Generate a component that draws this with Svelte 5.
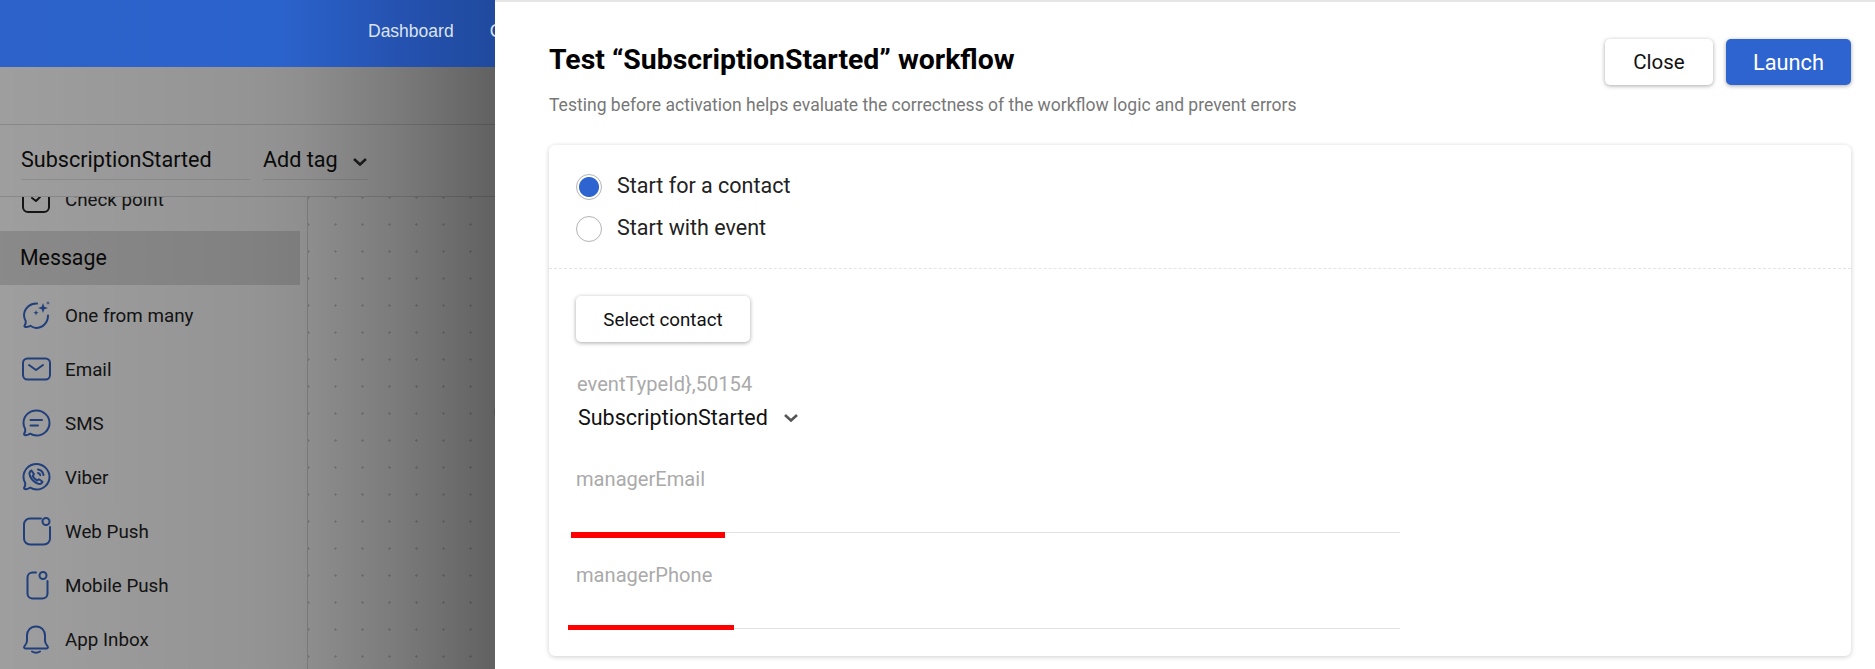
<script>
  const field = [
    { label: 'managerEmail', cls: 'email' },
    { label: 'managerPhone', cls: 'phone' }
  ];
</script>

<div class="page">
  <header class="top">
    <nav class="nav"><span>Dashboard</span><span>Contacts</span></nav>
  </header>
  <div class="toolbar"></div>
  <div class="titlebar">
    <div class="name">SubscriptionStarted</div>
    <div class="tag">Add tag
      <svg class="chev" width="16" height="10" viewBox="0 0 16 10"><path d="M2 2l6 5.500 6-5.500" fill="none" stroke="#333" stroke-width="2.600"/></svg>
    </div>
  </div>
  <main class="main">
    <aside class="side">
      <div class="item check">
        <svg viewBox="0 0 28 28" class="ico"><path d="M1 4v18a5 5 0 0 0 5 5h16a5 5 0 0 0 5-5V4M10 13l4 3 4-4" /></svg>
        <span>Check point</span>
      </div>
      <div class="group">Message</div>
      <div class="item">
        <svg viewBox="0 0 28 28" class="ico"><path d="M15 2.600A12.200 12.200 0 0 0 2 14c0 2.300.6 4.300 1.700 6 .3 1.500-.2 3.500-1.300 5 .2 1 1 1.200 2 1 1.600-.2 3-.6 4-1.300A12.700 12.700 0 0 0 14 27c6.500 0 12-5 12-12.500"/><path class="fill" d="M21 2l1.300 3.700L26 7l-3.700 1.300L21 12l-1.300-3.700L16 7l3.700-1.300zM14 9l.7 2 2 .7-2 .7-.7 2-.7-2-2-.7 2-.7zM26 0l.5 1.500L28 2l-1.500.5L26 4l-.5-1.500L24 2l1.500-.5z"/></svg>
        <span>One from many</span>
      </div>
      <div class="item">
        <svg viewBox="0 0 28 28" class="ico"><rect x="1" y="3.500" width="27" height="21" rx="4.500"/><path d="M7 10l7 5 7-5"/></svg>
        <span>Email</span>
      </div>
      <div class="item">
        <svg viewBox="0 0 28 28" class="ico"><path d="M14.500 1.500C7 1.500 1.500 7 1.500 14c0 2.300.6 4.300 1.700 6 .3 1.500-.1 3.500-1.200 5 .2 1 1 1.300 2 1.200 1.700-.2 3-.7 4.200-1.500 2 1.200 4 1.800 6.300 1.800 7 0 13-5.500 13-12.500s-6-12.500-13-12.500z"/><path d="M8.500 11h11.500M8.500 16.500h7.500"/></svg>
        <span>SMS</span>
      </div>
      <div class="item">
        <svg viewBox="0 0 28 28" class="ico"><path d="M14.500 1C7 1 1.500 7 1.500 14c0 2.300.6 4.300 1.700 6 .3 1.500-.1 3.500-1.200 5 .2 1 1 1.300 2 1.200 1.700-.2 3-.7 4.200-1.500 2 1.200 4 1.800 6.300 1.800 7 0 13-5.500 13-12.500S21.500 1 14.500 1z"/><path d="M9.500 7.500c-2 1-2.500 3-1.500 5.500 1.500 3.500 4 6 7.500 7.500 2.300.8 4.300.2 5-1.800l-3.500-2.500-1.800 1.300c-2-1-3.500-2.500-4.500-4.500l1.300-1.800zM16 6.500c3 .5 5 2.500 5.500 5.500M16 10c1.300.3 2 1 2.300 2.300"/></svg>
        <span>Viber</span>
      </div>
      <div class="item">
        <svg viewBox="0 0 28 28" class="ico"><path d="M19 1.500H8a6 6 0 0 0-6 6v14a6 6 0 0 0 6 6h14a6 6 0 0 0 6-6V10"/><circle cx="24" cy="4.500" r="3.500"/></svg>
        <span>Web Push</span>
      </div>
      <div class="item">
        <svg viewBox="0 0 28 28" class="ico"><path d="M14 1.500h-3.500a5 5 0 0 0-5 5v16a5 5 0 0 0 5 5h10a5 5 0 0 0 5-5V10"/><circle cx="21" cy="4.500" r="3.500"/></svg>
        <span>Mobile Push</span>
      </div>
      <div class="item">
        <svg viewBox="0 0 28 28" class="ico"><path d="M14 1.500c-5.500 0-9 4-9 9v5c0 3-1.300 4-2.500 5.500-1 1.300-.2 2.500 1.300 2.500h20.400c1.500 0 2.300-1.200 1.300-2.500C24.300 19.500 23 18.500 23 15.500v-5c0-5-3.500-9-9-9z"/><path d="M10 26.500c2.500 1.500 5.500 1.500 8 0"/></svg>
        <span>App Inbox</span>
      </div>
    </aside>
    <section class="canvas"></section>
  </main>
  <i class="toggle"></i>

  <div class="shade"></div>

  <section class="drawer">
    <div class="dhead">
      <div>
        <h1>Test “SubscriptionStarted” workflow</h1>
        <p>Testing before activation helps evaluate the correctness of the workflow logic and prevent errors</p>
      </div>
      <div class="actions">
        <button class="btn close">Close</button>
        <button class="btn launch">Launch</button>
      </div>
    </div>
    <div class="card">
      <div class="radios">
        <div class="radio"><i class="dot on"></i>Start for a contact</div>
        <div class="radio"><i class="dot"></i>Start with event</div>
      </div>
      <div class="body">
        <button class="btn contact">Select contact</button>
        <div class="muted evt">eventTypeId},50154</div>
        <div class="select">SubscriptionStarted
          <svg width="16" height="10" viewBox="0 0 16 10"><path d="M2 2l6 5.500 6-5.500" fill="none" stroke="#555" stroke-width="2.600"/></svg>
        </div>
        {#each field as f}
          <div class="field {f.cls}">
            <div class="muted">{f.label}</div>
            <i class="red"></i>
          </div>
        {/each}
      </div>
    </div>
  </section>
</div>

<style>
  :global(body) { margin: 0; background: #fff; }
  .page {
    position: relative; width: 1875px; height: 669px; overflow: hidden;
    font-family: Roboto, "Liberation Sans", sans-serif; color: #111; background: #fff;
  }
  .top {
    position: relative; z-index: 2; height: 67px; display: flex; align-items: center;
    background: linear-gradient(90deg, #2c62ca 0, #2b63cc 280px, #2552b0 400px, #1f4a9e 495px);
  }
  .nav { display: flex; gap: 36px; margin-left: 368px; font: 17.500px/1 "Liberation Sans", sans-serif; color: #dde3ee; margin-top: -3px; }
  .toolbar { height: 58px; border-bottom: 1px solid #dcdcdc; box-sizing: border-box; }
  .titlebar {
    display: flex; gap: 13px; height: 72px; padding-left: 21px; box-sizing: border-box;
    border-bottom: 1px solid #dcdcdc; background: #fff; font-size: 21.600px;
  }
  .name { width: 229px; height: 54px; line-height: 69px; border-bottom: 1px solid #e4e4e4; }
  .tag { width: 105px; height: 54px; line-height: 69px; border-bottom: 1px solid #e4e4e4; white-space: nowrap; }
  .chev { margin-left: 9px; }
  .main { display: flex; height: 472px; overflow: hidden; }
  .side { width: 308px; box-sizing: border-box; border-right: 1px solid #dadada; flex: none; margin-top: -24px; font-size: 18.800px; }
  .item { height: 54px; display: flex; align-items: center; gap: 15px; padding-left: 22px; color: #222; }
  .check { margin-bottom: 4px; }
  .group { width: 300px; height: 54px; margin-bottom: 4px; background: #dedede; line-height: 54px; padding-left: 20px; box-sizing: border-box; font-size: 21.300px; }
  .ico { width: 28px; height: 28px; margin-top: -2px; flex: none; fill: none; stroke: #3566c8; stroke-width: 2; stroke-linecap: round; stroke-linejoin: round; overflow: visible; }
  .ico .fill { fill: #3566c8; stroke: none; }
  .check .ico { stroke: #222; }
  .canvas {
    flex: 1; background-image: radial-gradient(circle, #d4d4d4 1px, transparent 1.300px);
    background-size: 27px 27px; background-position: 14px 14px;
  }
  .toggle { position: absolute; left: 494px; top: 396px; width: 32px; height: 32px; border: 1px solid #d0d0d0; border-radius: 50%; box-sizing: border-box; }
  .shade {
    position: absolute; left: 0; top: 0; width: 495px; height: 669px; z-index: 1;
    background: linear-gradient(90deg, rgba(0,0,0,.38) 0, rgba(0,0,0,.42) 250px, rgba(0,0,0,.44) 300px, rgba(0,0,0,.52) 400px, rgba(0,0,0,.62) 495px);
  }
  .drawer {
    position: absolute; left: 495px; top: 0; right: 0; bottom: 0; z-index: 3;
    background: #fff; border-top: 2px solid #e6e6e6; box-sizing: border-box; padding: 37px 24px 0 54px;
  }
  .dhead { display: flex; justify-content: space-between; height: 106px; }
  h1 { margin: 3px 0 0; font-size: 28.400px; line-height: 36px; font-weight: 700; color: #000; }
  p { margin: 17px 0 0; font-size: 17.550px; line-height: 20px; color: #777; }
  .actions { display: flex; gap: 13px; }
  .btn { font: inherit; border: 0; border-radius: 5px; background: #fff; color: #111; box-shadow: 0 1px 4px rgba(0,0,0,.35); cursor: pointer; }
  .close { width: 108px; height: 46px; font-size: 20.500px; }
  .launch { width: 125px; height: 46px; font-size: 21.800px; background: #2d64cf; color: #fff; }
  .card { height: 511px; border-radius: 6px; background: #fff; box-shadow: 0 1px 5px rgba(0,0,0,.2); box-sizing: border-box; }
  .radios { height: 124px; padding: 21px 27px 0; box-sizing: border-box; border-bottom: 1px dashed #e4e4e4; }
  .radio { display: flex; align-items: center; gap: 15px; height: 40px; padding-bottom: 2px; font-size: 21.500px; line-height: 42px; color: #222; }
  .dot { width: 26px; height: 26px; box-sizing: border-box; border: 1.500px solid #b4b4b4; border-radius: 50%; background: #fff; flex: none; margin-top: 2px; }
  .dot.on { background: radial-gradient(circle, #2d64cf 9.500px, #fff 10.500px); }
  .body { padding: 27px 27px 0; }
  .contact { display: block; width: 174px; height: 46px; font-size: 18.750px; padding-top: 2px; }
  .muted { color: #aaa; font-size: 20.100px; line-height: 24px; }
  .evt { margin-top: 30px; margin-left: 1px; }
  .select { display: flex; align-items: center; gap: 15px; font-size: 21.500px; line-height: 24px; margin: 10px 0 0 2px; color: #111; }
  .field { position: relative; width: 824px; box-sizing: border-box; border-bottom: 1px solid #e2e2e2; }
  .field.email { margin-top: 37px; height: 66px; }
  .field.phone { height: 96px; padding-top: 30px; }
  .red { position: absolute; background: #fe0000; }
  .email .red { left: -5px; width: 154px; bottom: -6px; height: 6px; }
  .phone .red { left: -8px; width: 166px; bottom: -2px; height: 5px; }
</style>
